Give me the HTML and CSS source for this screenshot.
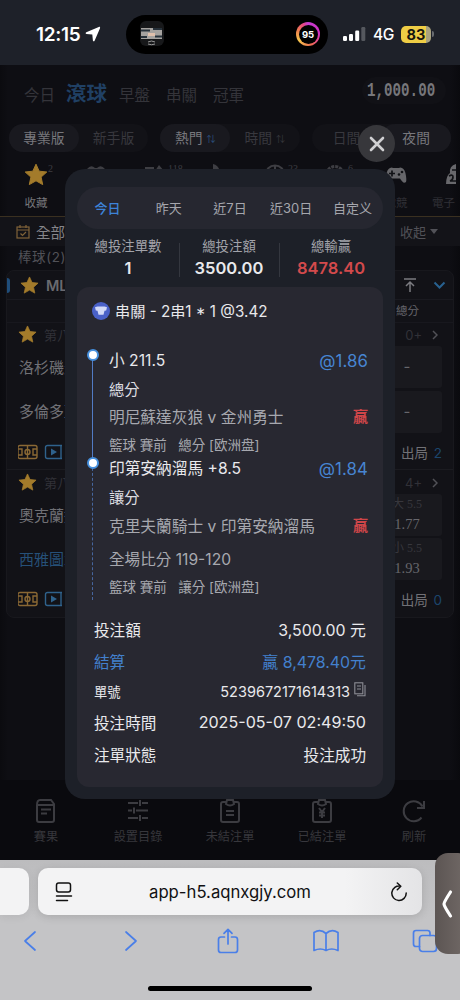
FILE: index.html
```html
<!DOCTYPE html>
<html lang="zh-Hant">
<head>
<meta charset="utf-8">
<title>投注記錄</title>
<link rel="stylesheet" href="styles.css">
</head>
<body>
<div class="phone">
  <header class="status">
    <span class="clock">12:15</span>
    <svg class="loc" width="16" height="16" viewBox="0 0 16 16"><path d="M13.800.900 1.300 6.300C.3 6.800.5 7.900 1.500 8l5.800.6.600 5.900c.1 1 1.300 1.200 1.700.2L15 2.200c.4-.9-.3-1.600-1.200-1.300z" fill="#fff"/></svg>
    <div class="island">
      <svg width="26" height="26" viewBox="0 0 26 26"><rect x="1" y="0" width="24" height="25" rx="6" fill="#17181a"/><rect x="2" y="7" width="21" height="11" fill="#a5a29f"/><path d="M2 9.500h9M14 8h9M2 16h6M16 15.500h7" stroke="#27313a" stroke-width="2"/><path d="M9 12h7v3H9z" fill="#e0c0ac"/><path d="M9 21q3.500-2 7 0M9 23q3.500 1.500 7 0" stroke="#999" fill="none"/></svg>
      <div class="ring"><span>95</span></div>
    </div>
    <svg class="signal" width="23" height="15" viewBox="0 0 23 15"><g fill="#fff"><rect x="0" y="9" width="4" height="5" rx="1.200"/><rect x="6" y="7" width="4" height="7" rx="1.200"/><rect x="12.200" y="3.500" width="4" height="10.500" rx="1.200"/></g><rect x="18.300" y="0" width="4" height="14" rx="1.200" fill="#55585e"/></svg>
    <span class="net">4G</span>
    <span class="battery">83</span>
    <i class="battery-tip"></i>
  </header>

  <main class="app">
    <nav class="topnav">
      <span class="t1">今日</span><b>滾球</b><span class="t3">早盤</span><span class="t4">串關</span><span>冠軍</span>
      <span class="balance"><span>1,000.00</span></span>
    </nav>
    <div class="switches">
      <div class="switch"><span class="on">專業版</span><span>新手版</span></div>
      <div class="switch"><span class="on">熱門 <i class="sort blue">⇅</i></span><span>時間 <i class="sort">⇅</i></span></div>
      <div class="switch"><span>日間</span><span class="on">夜間</span></div>
    </div>
    <div class="sports">
      <div class="sport"><svg width="24" height="24" viewBox="0 0 24 24"><use href="#star"/></svg><sup>2</sup><span class="lit">收藏</span></div>
      <div class="sport"><svg width="24" height="24" viewBox="0 0 24 24"><path d="M3 6q4-5 8-1h2q4-4 8 1v8H3z" fill="#3e3e43"/></svg></div>
      <div class="sport"><svg width="24" height="24" viewBox="0 0 24 24"><path d="M1 4h9v8H1zM15 2l5 6h-9z" fill="#3e3e43"/></svg><sup>118</sup></div>
      <div class="sport"><svg width="24" height="24" viewBox="0 0 24 24"><path d="M9 1q5 1 7 7H9z" fill="#3e3e43"/></svg></div>
      <div class="sport"><svg width="24" height="24" viewBox="0 0 24 24"><circle cx="11" cy="12" r="9.500" fill="none" stroke="#3e3e43" stroke-width="2"/><path d="M11 2v5" stroke="#3e3e43" stroke-width="2"/></svg><sup>23</sup></div>
      <div class="sport"><svg width="24" height="24" viewBox="0 0 24 24"><circle cx="11" cy="12" r="8.500" fill="none" stroke="#3e3e43" stroke-width="3" stroke-dasharray="3 1"/></svg><sup>6</sup></div>
      <div class="sport"><svg width="24" height="24" viewBox="0 0 24 24"><path d="M6 5q2-1 3 0h6q1-1 3 0 3 1 4 8t-1 6.500q-2 1-5-4H8q-3 5-5 4-2 .5-1-6.500T6 5z" fill="#66666a"/><path d="M5 10.500h6M8 7.500v6" stroke="#111216" stroke-width="1.700"/><circle cx="15" cy="11.500" r="1.300" fill="#111216"/><circle cx="18" cy="9" r="1.300" fill="#111216"/></svg><span>電競</span></div>
      <div class="sport last"><svg width="11" height="24" viewBox="0 0 11 24"><path d="M10 1Q3 3 4 10q-4 3-4 11h10z" fill="#68686c"/><path d="M10 7H6M3 13q4-2 4 1t-3 4h6" stroke="#111216" stroke-width="1.700" fill="none"/></svg><span>電子</span></div>
    </div>
    <div class="filter">
      <svg width="14" height="14" viewBox="0 0 14 14" fill="none" stroke="#806339" stroke-width="1.200"><rect x="1" y="2" width="12" height="11"/><path d="M1 5h12M4 0v3M10 0v3M4.500 8.500l2 2 3.500-3.500"/></svg>
      <span class="all">全部聯賽</span><span class="fold">收起<i></i></span>
    </div>
    <div class="group">棒球(2)</div>
    <section class="league">
      <div class="league-head"><i class="mark"></i><svg width="19" height="19" viewBox="0 0 24 24"><use href="#star"/></svg><span>MLB</span>
        <svg class="totop" width="14" height="15" viewBox="0 0 14 15" fill="none" stroke="#7b7b80" stroke-width="1.500"><path d="M1 1h12M7 14V4M3 8l4-4 4 4"/></svg>
        <svg width="13" height="9" viewBox="0 0 13 9" fill="none" stroke="#28618f" stroke-width="2"><path d="M1.500 1.500l5 5 5-5"/></svg>
      </div>
      <div class="cols"><span>總分</span></div>
      <article class="match">
        <div class="match-head"><svg width="19" height="19" viewBox="0 0 24 24"><use href="#star"/></svg><span>第八局</span><span class="more">0+</span><svg width="6" height="10" viewBox="0 0 6 10" fill="none" stroke="#515157" stroke-width="1.500"><path d="M1 1l4 4-4 4"/></svg></div>
        <div class="team"><span>洛杉磯天使</span><div class="odd dash">-</div></div>
        <div class="team"><span>多倫多藍鳥</span><div class="odd dash">-</div></div>
        <div class="match-foot"><svg width="44" height="16" viewBox="0 0 44 16"><use href="#live"/></svg><span>出局 <b>2</b></span></div>
      </article>
      <article class="match second">
        <div class="match-head"><svg width="19" height="19" viewBox="0 0 24 24"><use href="#star"/></svg><span>第八局</span><span class="more">4+</span><svg width="6" height="10" viewBox="0 0 6 10" fill="none" stroke="#515157" stroke-width="1.500"><path d="M1 1l4 4-4 4"/></svg></div>
        <div class="team"><span>奧克蘭運動家</span><div class="odd"><small>大 5.5</small><em>1.77</em></div></div>
        <div class="team bat"><span>西雅圖水手</span><div class="odd"><small>小 5.5</small><em>1.93</em></div></div>
        <div class="match-foot"><svg width="44" height="16" viewBox="0 0 44 16"><use href="#live"/></svg><span>出局 <b>0</b></span></div>
      </article>
    </section>
    <nav class="tabbar">
      <div><svg width="24" height="26" viewBox="0 0 24 26"><path d="M3 7q0-5 3-5h11l3 4v16q0 2-2 2H5q-2 0-2-2zM3 7h17M7 11.500h10M7 15.500h6"/></svg>賽果</div>
      <div><svg width="24" height="26" viewBox="0 0 24 26"><path d="M2 5h10M16 5h6M14 2v6M2 12.500h4M10 12.500h12M8 9.500v6M2 20h10M16 20h6M14 17v6"/></svg>設置目錄</div>
      <div><svg width="24" height="26" viewBox="0 0 24 26"><path d="M8 4H5Q3 4 3 6v16q0 2 2 2h14q2 0 2-2V6q0-2-2-2h-3M8 6l1-4h6l1 4q-4 3-8 0zM8 13h8M8 17h8"/></svg>未結注單</div>
      <div><svg width="24" height="26" viewBox="0 0 24 26"><path d="M8 4H5Q3 4 3 6v16q0 2 2 2h14q2 0 2-2V6q0-2-2-2h-3M8 6l1-4h6l1 4q-4 3-8 0zM9 10l3 4 3-4M12 14v6M9 14.500h6M9 17.500h6"/></svg>已結注單</div>
      <div><svg width="26" height="26" viewBox="0 0 26 26"><path d="M20.500 19.500a10 10 0 1 1 1-11M23 3v7h-7"/></svg>刷新</div>
    </nav>
  </main>

  <footer class="browser">
    <div class="address-row">
      <div class="prev-tab"></div>
      <div class="address">
        <svg width="18" height="20" viewBox="0 0 18 20" fill="none" stroke="#111" stroke-width="1.500" stroke-linecap="round"><rect x="1.500" y="1" width="14" height="9" rx="2.200"/><path d="M1.500 14h15M1.500 18.500h11"/></svg>
        <span>app-h5.aqnxgjy.com</span>
        <svg width="18" height="20" viewBox="0 0 18 20" fill="none" stroke="#111" stroke-width="1.500" stroke-linecap="round" stroke-linejoin="round"><path d="M10.500 4.200A7.200 7.200 0 1 0 16.200 11M7.300 1l3.500 3.200-3.500 3.600"/></svg>
      </div>
    </div>
    <div class="tools">
      <svg width="14" height="22" viewBox="0 0 14 22"><path d="M12 2 2 11l10 9"/></svg>
      <svg width="14" height="22" viewBox="0 0 14 22"><path d="M2 2l10 9-10 9"/></svg>
      <svg width="22" height="26" viewBox="0 0 22 26"><path d="M7.500 9H4Q1.500 9 1.500 11.500V22q0 2.500 2.500 2.500h14q2.500 0 2.500-2.500V11.500Q20.500 9 18 9h-3.500M11 16V1.500M7 5.300l4-4 4 4"/></svg>
      <svg width="26" height="24" viewBox="0 0 26 24"><path d="M13 4.500Q7.500-.5 1 3.500v18q6.500-3 12 0 5.500-3 12 0v-18q-6.500-4-12 1zM13 4.500v17"/></svg>
      <svg width="26" height="24" viewBox="0 0 26 24"><rect x="7.500" y="6.500" width="17" height="16" rx="3"/><path d="M7.500 17.500H4q-2.500 0-2.500-2.500V4Q1.500 1.500 4 1.500h11.500Q18 1.500 18 4v2.500"/></svg>
    </div>
    <div class="home"></div>
  </footer>

  <section class="modal">
    <div class="tabs"><span class="on">今日</span><span>昨天</span><span>近7日</span><span>近30日</span><span>自定义</span></div>
    <div class="stats">
      <div><span>總投注單數</span><b>1</b></div>
      <div><span>總投注額</span><b>3500.00</b></div>
      <div class="red"><span>總輸贏</span><b>8478.40</b></div>
    </div>
    <div class="slip">
      <h2><svg width="18" height="18" viewBox="0 0 18 18"><circle cx="9" cy="9" r="9" fill="#4a61c8"/><path d="M5.500 4.500h7l2.500.8-.8 3.200-1.700.3-1 4h-5l-1-4-1.700-.3L3 5.300z" fill="#d3daf8"/></svg><span>串關 - 2串1 * 1 @3.42</span></h2>
      <div class="leg">
        <p class="pick"><span>小 211.5</span><em>@1.86</em></p>
        <p class="market">總分</p>
        <p class="teams"><span>明尼蘇達灰狼 v 金州勇士</span><b>贏</b></p>
        <p class="meta">籃球 賽前&nbsp;&nbsp; 總分 [欧洲盘]</p>
      </div>
      <div class="leg leg2">
        <p class="pick"><span>印第安納溜馬 +8.5</span><em>@1.84</em></p>
        <p class="market">讓分</p>
        <p class="teams"><span>克里夫蘭騎士 v 印第安納溜馬</span><b>贏</b></p>
        <p class="score">全場比分 119-120</p>
        <p class="meta">籃球 賽前&nbsp;&nbsp; 讓分 [欧洲盘]</p>
      </div>
      <dl>
        <div class="r1"><dt>投注額</dt><dd>3,500.00 元</dd></div>
        <div class="r2"><dt>結算</dt><dd>贏 8,478.40元</dd></div>
        <div class="r3"><dt>單號</dt><dd>5239672171614313<svg width="12" height="15" viewBox="0 0 12 15" fill="none" stroke="#8c8d95" stroke-width="1.100"><rect x=".8" y=".8" width="8" height="11"/><path d="M3 4h4M3 7h4M3 13.800h8V3"/></svg></dd></div>
        <div class="r4"><dt>投注時間</dt><dd>2025-05-07 02:49:50</dd></div>
        <div class="r5"><dt>注單狀態</dt><dd>投注成功</dd></div>
      </dl>
    </div>
  </section>
  <button class="close" aria-label="關閉"><svg width="18" height="18" viewBox="0 0 18 18" stroke="#d0d0d2" stroke-width="2.600" stroke-linecap="round"><path d="M3 3l12 12M15 3 3 15"/></svg></button>
  <div class="handle"><svg width="12" height="30" viewBox="0 0 12 30" fill="none" stroke="#fff" stroke-width="3.200" stroke-linecap="round" stroke-linejoin="round"><path d="M8.500 3Q2 13 2 15t6.500 12"/></svg></div>
</div>
<svg class="defs" width="0" height="0">
  <symbol id="star" viewBox="0 0 24 24"><path d="M12 1.200l3.200 7 7.600.8-5.700 5.100 1.600 7.500L12 17.800l-6.700 3.800 1.600-7.500L1.200 9l7.600-.8z" fill="#a37b2b" stroke="#a37b2b" stroke-linejoin="round"/></symbol>
  <symbol id="live" viewBox="0 0 44 16"><g fill="none" stroke="#8a6834" stroke-width="1.400"><rect x="0" y="1.500" width="19" height="13" rx="2"/><path d="M9.500 1.500v13M0 5h4v6H0M19 5h-4v6h4"/><circle cx="9.500" cy="8" r="2.500"/></g><g fill="none" stroke="#2f628c" stroke-width="1.400"><rect x="27.500" y="1.500" width="19" height="13" rx="2"/><path d="M43 2v12"/></g><path d="M33 4.500v7l6-3.500z" fill="#2f628c"/></symbol>
</svg>
</body>
</html>
```

FILE: styles.css
```css
*, *::before, *::after { box-sizing: border-box; }
body { margin: 0; background: #0c0c10; font-family: Inter, "Noto Sans CJK TC", sans-serif; }
p, h2, dl, dd { margin: 0; font-weight: 400; }
i, em { font-style: normal; }
svg { flex: none; display: block; }
.defs { position: absolute; }
.phone { position: relative; width: 460px; height: 1000px; overflow: hidden; display: flex; flex-direction: column; white-space: nowrap; }

/* status bar */
.status { height: 65px; flex: none; background: #1e2129; color: #fff; display: flex; align-items: center; padding: 3px 0 0 36px; }
.clock { width: 49px; font-size: 19px; font-weight: 600; letter-spacing: -.3px; }
.island { width: 202px; height: 39px; margin-left: 25px; border-radius: 20px; background: #000; display: flex; align-items: center; justify-content: space-between; padding: 0 8px 0 13px; }
.ring { width: 24px; height: 24px; border-radius: 50%; padding: 2.5px; background: conic-gradient(#c43bd0, #d62fc0 25%, #ef6a52 45%, #f4c44c 65%, #f0824d 80%, #e5477d 92%, #c43bd0); }
.ring span { display: block; height: 19px; border-radius: 50%; background: #000; font-size: 9.5px; font-weight: 700; line-height: 19px; text-align: center; }
.signal { margin-left: 15px; }
.net { width: 28px; margin-left: 7px; font-size: 15.5px; font-weight: 500; letter-spacing: -.4px; }
.battery { width: 30px; height: 17px; border-radius: 5px; background: linear-gradient(90deg, #efcd45 83%, #a9a27f 83%); color: #16150f; font-size: 14.500px; font-weight: 700; line-height: 17px; text-align: center; }
.battery-tip { width: 2px; height: 6px; margin-left: 1px; background: #686b70; border-radius: 0 2px 2px 0; }

/* dimmed betting page */
.app { height: 795px; flex: none; display: flex; flex-direction: column; background: linear-gradient(90deg, #0b0b0f, #0e0e13 8px, #0e0e13 450px, #0a0a0e); color: #6f6f74; }
.topnav { height: 57px; flex: none; display: flex; align-items: center; padding: 0 14px 0 24px; font-size: 15.5px; color: #34343a; }
.topnav b { width: 53px; margin-left: 11px; color: #204064; font-size: 20.5px; font-weight: 700; padding-bottom: 4px; }
.t3 { width: 47px; }
.t4 { width: 47px; }
.balance { width: 84px; height: 27px; margin: -6px 0 0 auto; border-radius: 14px; background: #111116; }
.balance span { display: block; width: 100px; transform: scaleX(.71); transform-origin: 0 0; margin-left: 5px; font: bold 20px/27px "Liberation Mono", monospace; color: #77777b; }
.switches { height: 32px; flex: none; display: flex; align-items: center; gap: 12px; padding: 0 9px; }
.switch { width: 140px; height: 28px; border-radius: 14px; background: #121217; display: flex; font-size: 13.8px; line-height: 28px; color: #38383e; }
.switch span { flex: 1; text-align: center; border-radius: 14px; }
.switch .on { background: #19191f; color: #77777c; }
.sort { font-size: 9px; vertical-align: 1px; }
.switch .blue { color: #2d5480; }
.sports { height: 63px; flex: none; display: flex; padding: 9px 0 0 6px; border-bottom: 1px solid #3a3020; }
.sport { position: relative; width: 60px; flex: none; display: flex; flex-direction: column; align-items: center; font-size: 11.5px; line-height: 18px; color: #303036; gap: 7px; }
.sport.last { width: 30px; align-items: flex-end; margin-left: 1px; }
.sport.last span { margin-right: 2px; }
.sport sup { position: absolute; left: 42px; top: -1px; font: 10px/14px "Liberation Serif", serif; color: #3d3d42; }
.sport .lit { color: #77777b; }
.filter { height: 29px; flex: none; display: flex; align-items: center; padding: 0 22px 0 16px; background: #131318; font-size: 14.5px; color: #85858a; }
.all { margin-left: 6px; }
.fold { display: flex; align-items: center; gap: 4px; margin-left: auto; font-size: 13px; color: #515157; }
.fold i { border: 4px solid transparent; border-top: 5px solid #515157; border-bottom: 0; }
.group { height: 24px; flex: none; padding-left: 18px; font-size: 13.5px; line-height: 22px; color: #515157; letter-spacing: .6px; }
.league { width: 448px; height: 348px; flex: none; margin-left: 6px; background: #121217; border: 1px solid #18181d; border-radius: 8px; }
.league-head { height: 29px; display: flex; align-items: center; border-bottom: 1px solid #1a1a20; padding-right: 7px; font-size: 14.5px; font-weight: 600; color: #6a6a70; }
.mark { width: 3px; height: 15px; margin-right: 10px; background: #1f4d7a; border-radius: 0 4px 4px 0; }
.league-head span { margin-left: 7px; }
.totop { margin: 0 16px 0 auto; }
.cols { height: 23px; padding: 0 34px 0 0; text-align: right; font-size: 11.5px; line-height: 23px; color: #65656b; border-bottom: 1px solid #18181e; }
.match { height: 147px; border-bottom: 1px solid #1b1b20; }
.match.second { border: 0; }
.match-head { height: 23px; display: flex; align-items: center; padding: 0 15px 0 11px; font-size: 13px; color: #313137; }
.match-head span { margin-left: 7px; }
.match-head .more { margin: 0 10px 0 auto; }
.team { height: 44.500px; display: flex; align-items: center; justify-content: space-between; padding: 0 11px 0 12px; font-size: 15px; color: #717176; }
.team > span { padding-bottom: 4px; }
.team.bat { color: #265078; }
.odd { width: 70px; height: 42px; margin-top: -2px; border-radius: 3px; background: #19191e; display: flex; flex-direction: column; align-items: center; color: #66666b; line-height: 20px; }
.odd.dash { line-height: 42px; }
.odd small { font-family: "Liberation Serif", "Noto Sans CJK TC", serif; font-size: 12px; color: #37373d; }
.odd em { font: 14.500px/20px "Liberation Serif", serif; }
.match-foot { height: 34px; display: flex; align-items: center; justify-content: space-between; padding: 0 11px; font-size: 13.5px; color: #717176; }
.match-foot svg { overflow: visible; }
.match-foot b { color: #1c456c; font-weight: 400; margin-left: 2px; }
.second .match-head { height: 25px; padding-top: 0; }
.second .team > span { padding-bottom: 6px; }
.second .odd { margin-top: -5px; }
.second .match-foot { padding-bottom: 4px; }
.tabbar { height: 80px; margin-top: auto; display: flex; background: #0a0a0e; padding-top: 18px; font-size: 12.200px; line-height: 18px; color: #37373c; }
.tabbar div { width: 92px; display: flex; flex-direction: column; align-items: center; gap: 4px; }
.tabbar svg { fill: none; stroke: #3c3c41; stroke-width: 2; }

/* browser chrome */
.browser { height: 140px; flex: none; background: linear-gradient(#bcbcbe, #c4c4c6 60px); }
.address-row { display: flex; gap: 9px; padding-top: 8px; }
.prev-tab { width: 29px; height: 47px; border-radius: 0 10px 10px 0; background: #f3f3f4; box-shadow: 0 2px 8px #0001; }
.address { width: 384px; height: 47px; border-radius: 10px; background: linear-gradient(90deg, #f3f3f4 80%, #e4e4e6); box-shadow: 0 2px 8px #0002; display: flex; align-items: center; justify-content: space-between; padding: 0 14px 0 17px; font-size: 16.700px; color: #101012; }
.address span { margin-left: -3px; }
.tools { height: 52px; display: flex; align-items: center; padding-left: 23px; }
.tools svg { fill: none; stroke: #4a7fe8; stroke-width: 1.700; stroke-linecap: round; stroke-linejoin: round; }
.tools svg:nth-child(2) { margin-left: 87px; }
.tools svg:nth-child(3) { margin-left: 79px; }
.tools svg:nth-child(4) { margin-left: 74px; }
.tools svg:nth-child(5) { margin-left: 73px; }
.home { width: 164px; height: 5px; margin: 19px auto 0; border-radius: 3px; background: #000; }

/* bet record dialog */
.modal { position: absolute; left: 65px; top: 169px; width: 330px; height: 630px; padding: 18px 12px 12px; border-radius: 20px; background: #1d2028; color: #e9e9ec; }
.tabs { height: 42px; border-radius: 21px; background: #262730; display: flex; font-size: 13px; line-height: 42px; color: #a5a6ad; }
.tabs span { flex: 1; text-align: center; }
.tabs .on { color: #3d83d8; font-weight: 500; }
.stats { height: 58px; display: grid; grid-template-columns: 102px 100px 104px; padding-top: 8px; }
.stats div { display: flex; flex-direction: column; align-items: center; }
.stats div + div { background: linear-gradient(#34373f, #34373f) 0 6px / 1px 34px no-repeat; }
.stats span { font-size: 13.4px; line-height: 18px; color: #a2a3aa; }
.stats b { font-size: 16.500px; line-height: 27px; font-weight: 600; }
.stats .red b { color: #d34a4c; }
.slip { height: 500px; border-radius: 12px; background: #282831; padding: 0 17px 0 15px; }
.slip h2 { height: 58px; display: flex; align-items: center; gap: 5px; padding-bottom: 11px; font-size: 15.200px; }
.slip h2 span { margin-top: -2px; }
.leg { position: relative; padding-left: 17px; height: 109px; }
.leg::before { content: ""; position: absolute; left: 0; top: 10px; height: 108px; border-left: 1.500px solid #527bc4; }
.leg::after { content: ""; position: absolute; left: -5px; top: 4px; width: 12px; height: 12px; border: 2.5px solid #4690de; border-radius: 50%; background: #fff; }
.leg p { display: flex; justify-content: space-between; color: #a7a8af; }
.leg .pick { height: 30px; line-height: 32px; font-size: 15.700px; color: #e9e9ec; }
.pick em { color: #4785d2; font-size: 16.800px; margin-right: -2px; letter-spacing: .1px; }
.leg .market { height: 28px; line-height: 30px; font-size: 15.300px; color: #dddde1; }
.teams { height: 28px; line-height: 30px; font-size: 15.700px; }
.teams b { color: #cf4649; font-size: 15px; line-height: 28px; margin-right: -2px; }
.leg .meta { padding-top: 5px; line-height: 18px; font-size: 13.500px; }
.leg2 { height: 160px; }
.leg2::before { top: 9px; height: 137px; border-left-style: dashed; border-color: #47669e; }
.leg2::after { top: 3px; }
.leg2 .pick { height: 28px; line-height: 30px; }
.leg2 .market { height: 30px; line-height: 32px; }
.score { height: 38px; line-height: 40px; font-size: 15.600px; }
.leg2 .meta { padding: 0; }
dl { padding-left: 2px; margin-top: -1px; font-size: 15.600px; }
dl div { display: flex; align-items: center; justify-content: space-between; }
dd { display: flex; align-items: center; }
.r1 dd, .r2 dd { font-size: 15.900px; }
.r1, .r2 { height: 32px; }
.r2 { color: #4380cd; }
.r3 { height: 28px; font-size: 13.3px; }
.r3 dd { font-size: 14.500px; gap: 4px; }
.r3 svg { margin-top: -4px; }
.r4 { height: 34px; }
.r4 dd { font-size: 16.100px; }
.r5 { height: 30px; }
.close { position: absolute; left: 358px; top: 125px; width: 37px; height: 37px; padding: 0; border: 0; border-radius: 50%; background: #37373b; display: grid; place-items: center; }
.handle { position: absolute; left: 435px; top: 853px; width: 36px; height: 101px; border-radius: 13px; background: linear-gradient(90deg, #5c5553, #746c69); display: flex; align-items: center; padding-left: 7px; }
```
